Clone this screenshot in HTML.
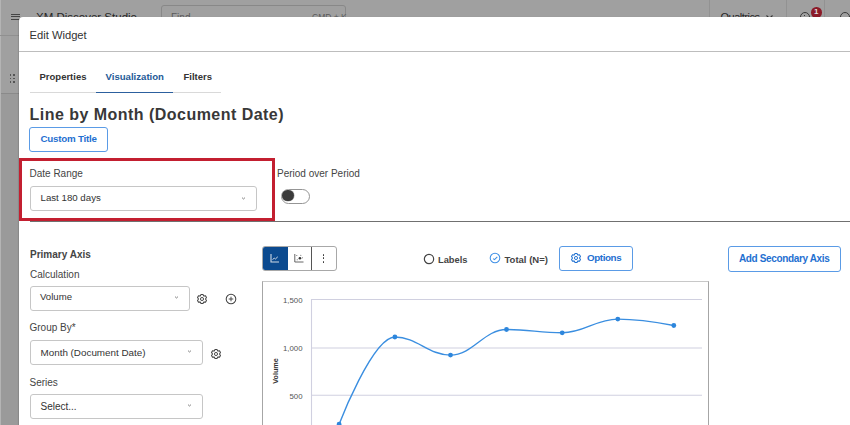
<!DOCTYPE html>
<html><head><meta charset="utf-8">
<style>
*{box-sizing:border-box;margin:0;padding:0}
html,body{width:850px;height:425px;overflow:hidden;background:#9a9a9a;font-family:"Liberation Sans",sans-serif}
.a{position:absolute;white-space:nowrap}
#bgtop{position:absolute;left:0;top:0;width:850px;height:93px;background:#a0a0a0}
#bgline{position:absolute;left:0;top:93px;width:850px;height:1px;background:#8a8a8a}
#strip{position:absolute;left:0;top:0;width:1px;height:425px;background:#b4b4b4}
#modal{position:absolute;left:19px;top:17px;width:840px;height:420px;background:#fff;border-radius:4px 0 0 0;box-shadow:-1px 0 1px rgba(0,0,0,.12)}
.t{position:absolute;white-space:nowrap;line-height:1}
.dd{position:absolute;border:1px solid #c6c6c6;border-radius:3px;background:#fff}
.btn{position:absolute;border:1px solid #5a9be6;border-radius:3px;background:#fff}
</style></head><body>
<div id="bgtop"></div><div id="bgline"></div><div id="strip"></div>
<div class="a" style="left:0;top:35px;width:19px;height:1px;background:#909090"></div>

<!-- app header under overlay -->
<div class="a" style="left:11px;top:13.5px;width:9px;height:1.2px;background:#454545"></div>
<div class="a" style="left:11px;top:16.1px;width:9px;height:1.2px;background:#454545"></div>
<div class="a" style="left:11px;top:18.8px;width:9px;height:1.2px;background:#454545"></div>
<div class="t" style="left:36px;top:11.5px;font-size:11.5px;color:#262626">XM Discover Studio</div>
<div class="a" style="left:160.5px;top:5px;width:185px;height:24px;border:1px solid #888;border-radius:3px"></div>
<div class="t" style="left:171px;top:13px;font-size:10px;color:#5a5a5a">Find</div>
<div class="t" style="left:312px;top:13px;font-size:8.5px;color:#5a5a5a">CMD + K</div>
<div class="a" style="left:709px;top:0;width:1px;height:20px;background:#929292"></div>
<div class="a" style="left:786px;top:0;width:1px;height:20px;background:#929292"></div>
<div class="a" style="left:824px;top:0;width:1px;height:20px;background:#929292"></div>
<div class="t" style="left:720.5px;top:11.6px;font-size:11px;letter-spacing:-0.5px;color:#262626">Qualtrics</div>
<svg class="a" style="left:765px;top:14px" width="9" height="6"><path d="M1.5 1.5 L4.5 4.3 L7.5 1.5" fill="none" stroke="#333" stroke-width="1.1"/></svg>
<div class="a" style="left:800px;top:12px;width:10px;height:10px;border:1.2px solid #3a3a3a;border-radius:50%"></div><div class="a" style="left:804.2px;top:14.8px;width:1.1px;height:1.1px;background:#3a3a3a"></div>
<div class="a" style="left:811px;top:7px;width:10.5px;height:10.5px;background:#8c1a28;border-radius:50%;color:#ddd;font-size:8px;font-weight:bold;line-height:10.5px;text-align:center">1</div>
<div class="a" style="left:840px;top:12px;width:10px;height:10px;border:1.2px solid #3a3a3a;border-radius:50%"></div>

<div class="a" style="left:9.7px;top:73.9px;width:1.8px;height:1.8px;background:#555"></div>
<div class="a" style="left:13.2px;top:73.9px;width:1.8px;height:1.8px;background:#555"></div>
<div class="a" style="left:9.7px;top:77.6px;width:1.8px;height:1.8px;background:#555"></div>
<div class="a" style="left:13.2px;top:77.6px;width:1.8px;height:1.8px;background:#555"></div>
<div class="a" style="left:9.7px;top:81.4px;width:1.8px;height:1.8px;background:#555"></div>
<div class="a" style="left:13.2px;top:81.4px;width:1.8px;height:1.8px;background:#555"></div>

<div id="modal"></div>

<!-- modal header -->
<div class="t" style="left:29.5px;top:29.5px;font-size:11.2px;color:#333">Edit Widget</div>
<div class="a" style="left:19px;top:51px;width:831px;height:1px;background:#bdbdbd"></div>

<!-- tabs -->
<div class="t" style="left:39.5px;top:72.1px;font-size:9.5px;font-weight:bold;color:#333">Properties</div>
<div class="t" style="left:105.5px;top:72.1px;font-size:9.6px;font-weight:bold;color:#245a97">Visualization</div>
<div class="t" style="left:183.5px;top:72.1px;font-size:9.5px;font-weight:bold;color:#333">Filters</div>
<div class="a" style="left:29.5px;top:92px;width:191.5px;height:1px;background:#d9d9d9"></div>
<div class="a" style="left:96px;top:91.5px;width:77px;height:1.5px;background:#2c609e"></div>

<!-- title -->
<div class="t" style="left:29.5px;top:107.2px;font-size:16px;font-weight:bold;color:#383838;letter-spacing:0.47px">Line by Month (Document Date)</div>
<div class="btn" style="left:29px;top:127px;width:79px;height:24.5px"></div>
<div class="t" style="left:40.5px;top:133.6px;font-size:9.8px;letter-spacing:-0.25px;font-weight:bold;color:#1f70d1">Custom Title</div>

<!-- date range -->
<div class="a" style="left:19px;top:158px;width:256px;height:63px;border:3px solid #c31f30"></div>
<div class="t" style="left:29.5px;top:169.2px;font-size:10px;color:#444">Date Range</div>
<div class="dd" style="left:29.5px;top:185.8px;width:227px;height:25px"></div>
<div class="t" style="left:40.5px;top:193px;font-size:9.7px;color:#333">Last 180 days</div>
<svg class="a" style="left:240.1px;top:195.6px" width="7" height="5"><path d="M2 1.6 L3.5 3 L5 1.6" fill="none" stroke="#777" stroke-width="0.9"/></svg>
<div class="t" style="left:277px;top:169.2px;font-size:10px;color:#444">Period over Period</div>
<div class="a" style="left:280.5px;top:188.5px;width:29.5px;height:15px;border:1.2px solid #959595;border-radius:8px;background:#fff"></div>
<div class="a" style="left:282.4px;top:190.3px;width:11.2px;height:11.2px;border-radius:50%;background:#3b3b3b;box-shadow:0 0 0 0.6px #bbb"></div>
<div class="a" style="left:29.5px;top:221px;width:821px;height:1px;background:#707070"></div>

<!-- primary axis -->
<div class="t" style="left:30px;top:250.3px;font-size:10px;font-weight:bold;color:#444">Primary Axis</div>
<div class="t" style="left:30px;top:269.9px;font-size:10px;color:#444">Calculation</div>
<div class="dd" style="left:29.5px;top:285.7px;width:160px;height:25px"></div>
<div class="t" style="left:40px;top:292.2px;font-size:9.6px;color:#333">Volume</div>
<svg class="a" style="left:172.5px;top:294.7px" width="7" height="5"><path d="M2 1.6 L3.5 3 L5 1.6" fill="none" stroke="#777" stroke-width="0.9"/></svg>
<div class="t" style="left:29.5px;top:323.3px;font-size:10px;color:#444">Group By*</div>
<div class="dd" style="left:29.5px;top:339.8px;width:173.5px;height:24.8px"></div>
<div class="t" style="left:40.5px;top:347.8px;font-size:9.85px;color:#333">Month (Document Date)</div>
<svg class="a" style="left:186.0px;top:349.0px" width="7" height="5"><path d="M2 1.6 L3.5 3 L5 1.6" fill="none" stroke="#777" stroke-width="0.9"/></svg>
<div class="t" style="left:29.5px;top:378.3px;font-size:10px;color:#444">Series</div>
<div class="dd" style="left:29.5px;top:394px;width:173.5px;height:24.8px"></div>
<div class="t" style="left:40.5px;top:402px;font-size:10px;color:#333">Select...</div>
<svg class="a" style="left:186.0px;top:403.0px" width="7" height="5"><path d="M2 1.6 L3.5 3 L5 1.6" fill="none" stroke="#777" stroke-width="0.9"/></svg>

<!-- gear icons -->
<svg class="a" style="left:195.6px;top:293.3px" width="12" height="12" viewBox="0 0 24 24"><path d="M10.05 2.81 L13.95 2.81 L15.50 5.94 L18.99 5.71 L20.94 9.10 L19.00 12.00 L20.94 14.90 L18.99 18.29 L15.50 18.06 L13.95 21.19 L10.05 21.19 L8.50 18.06 L5.01 18.29 L3.06 14.90 L5.00 12.00 L3.06 9.10 L5.01 5.71 L8.50 5.94 Z" fill="none" stroke="#444" stroke-width="2.1" stroke-linejoin="round"/><circle cx="12" cy="12" r="3.1" fill="none" stroke="#444" stroke-width="1.9"/></svg>
<svg class="a" style="left:224.7px;top:293.3px" width="12" height="12" viewBox="0 0 24 24"><circle cx="12" cy="12" r="9.6" fill="none" stroke="#444" stroke-width="2.1"/><path d="M12 7.4 V16.6 M7.4 12 H16.6" stroke="#444" stroke-width="1.9"/></svg>
<svg class="a" style="left:209.5px;top:348.3px" width="12" height="12" viewBox="0 0 24 24"><path d="M10.05 2.81 L13.95 2.81 L15.50 5.94 L18.99 5.71 L20.94 9.10 L19.00 12.00 L20.94 14.90 L18.99 18.29 L15.50 18.06 L13.95 21.19 L10.05 21.19 L8.50 18.06 L5.01 18.29 L3.06 14.90 L5.00 12.00 L3.06 9.10 L5.01 5.71 L8.50 5.94 Z" fill="none" stroke="#444" stroke-width="2.1" stroke-linejoin="round"/><circle cx="12" cy="12" r="3.1" fill="none" stroke="#444" stroke-width="1.9"/></svg>

<!-- chart type button group -->
<div class="a" style="left:262px;top:246.3px;width:75px;height:25.2px;border:1px solid #a8a8a8;border-radius:3px;background:#fff;overflow:hidden">
  <div class="a" style="left:-1px;top:-1px;width:26px;height:25.2px;background:#0b4a8f"></div>
  <div class="a" style="left:48px;top:0;width:1px;height:24px;background:#555"></div>
</div>
<svg class="a" style="left:268px;top:251px" width="14" height="14" viewBox="0 0 14 14"><path d="M3 3 V11 H11" fill="none" stroke="#cfd9e6" stroke-width="1.1"/><path d="M4.5 8.5 L6.3 7.2 L7.4 8 L9.8 5.8" fill="none" stroke="#cfd9e6" stroke-width="1"/></svg>
<svg class="a" style="left:292px;top:251px" width="14" height="14" viewBox="0 0 14 14"><path d="M2.8 3 V11 H11.5" fill="none" stroke="#555" stroke-width="0.9"/><circle cx="7.9" cy="7.3" r="1.3" fill="#333"/><circle cx="4.8" cy="4.5" r="0.5" fill="#555"/><circle cx="8.8" cy="4.3" r="0.5" fill="#555"/><circle cx="10.3" cy="6.8" r="0.5" fill="#555"/><circle cx="5.2" cy="8.8" r="0.5" fill="#555"/></svg>
<div class="a" style="left:322.6px;top:254px;width:1.9px;height:1.9px;background:#333;border-radius:1px"></div>
<div class="a" style="left:322.6px;top:257.4px;width:1.9px;height:1.9px;background:#333;border-radius:1px"></div>
<div class="a" style="left:322.6px;top:260.8px;width:1.9px;height:1.9px;background:#333;border-radius:1px"></div>

<!-- labels / total / options -->
<svg class="a" style="left:423px;top:252.6px" width="12" height="12" viewBox="0 0 24 24"><circle cx="12" cy="12" r="9.3" fill="none" stroke="#444" stroke-width="2.4"/></svg>
<div class="t" style="left:438px;top:255.6px;font-size:9.3px;font-weight:bold;color:#444">Labels</div>
<svg class="a" style="left:489.1px;top:252.35px" width="12" height="12" viewBox="0 0 24 24"><circle cx="12" cy="12" r="9.6" fill="none" stroke="#3f90e6" stroke-width="2.1"/><path d="M8.2 13.3 L11 15.3 L16.6 9.8" fill="none" stroke="#3f90e6" stroke-width="2.2"/></svg>
<div class="t" style="left:504.5px;top:254.6px;font-size:9.5px;font-weight:bold;color:#444">Total (N=)</div>
<div class="btn" style="left:558.5px;top:246.4px;width:74.5px;height:25.1px"></div>
<svg class="a" style="left:569.6px;top:252.3px" width="12" height="12" viewBox="0 0 24 24"><path d="M10.05 2.81 L13.95 2.81 L15.50 5.94 L18.99 5.71 L20.94 9.10 L19.00 12.00 L20.94 14.90 L18.99 18.29 L15.50 18.06 L13.95 21.19 L10.05 21.19 L8.50 18.06 L5.01 18.29 L3.06 14.90 L5.00 12.00 L3.06 9.10 L5.01 5.71 L8.50 5.94 Z" fill="none" stroke="#1f70d1" stroke-width="2.1" stroke-linejoin="round"/><circle cx="12" cy="12" r="3.1" fill="none" stroke="#1f70d1" stroke-width="1.9"/></svg>
<div class="t" style="left:587px;top:253.1px;font-size:9.8px;letter-spacing:-0.4px;font-weight:bold;color:#1f70d1">Options</div>
<div class="btn" style="left:728px;top:246.3px;width:112.5px;height:25.4px"></div>
<div class="t" style="left:739px;top:253.5px;font-size:10px;letter-spacing:-0.36px;font-weight:bold;color:#1f70d1">Add Secondary Axis</div>

<!-- chart -->
<div class="a" style="left:262px;top:280.5px;width:447px;height:160px;border:1px solid #a6a6a6;border-top-color:#c8c8c8"></div>
<svg class="a" style="left:0;top:0" width="850" height="425">
  <g stroke="#d0d0e0" stroke-width="1.1" fill="none">
    <path d="M311.5 299.5 H702"/><path d="M311.5 348 H702"/><path d="M311.5 395.2 H702"/>
    <path d="M311.5 299 V425"/>
  </g>
  <g font-family="Liberation Sans" font-size="7.8" fill="#555" text-anchor="end">
    <text x="302.5" y="303.2">1,500</text><text x="302.5" y="351.3">1,000</text><text x="302.5" y="398.6">500</text>
  </g>
  <text transform="translate(278,371) rotate(-90)" font-family="Liberation Sans" font-size="7.2" font-weight="bold" fill="#333" text-anchor="middle">Volume</text>
  <path d="M 339.10 424.20 C 339.10 424.20 372.58 337.00 394.90 337.00 C 417.14 337.00 428.26 355.10 450.50 355.10 C 472.90 355.10 484.10 329.50 506.50 329.50 C 528.78 329.50 539.92 332.80 562.20 332.80 C 584.44 332.80 595.56 319.10 617.80 319.10 C 640.20 319.10 673.80 325.50 673.80 325.50" fill="none" stroke="#3a8ee0" stroke-width="1.4"/>
  <g fill="#2d86dc">
    <circle cx="339.1" cy="424.2" r="2.4"/><circle cx="394.9" cy="337" r="2.4"/><circle cx="450.5" cy="355.1" r="2.4"/><circle cx="506.5" cy="329.5" r="2.4"/><circle cx="562.2" cy="332.8" r="2.4"/><circle cx="617.8" cy="319.1" r="2.4"/><circle cx="673.8" cy="325.5" r="2.4"/>
  </g>
</svg>
</body></html>
